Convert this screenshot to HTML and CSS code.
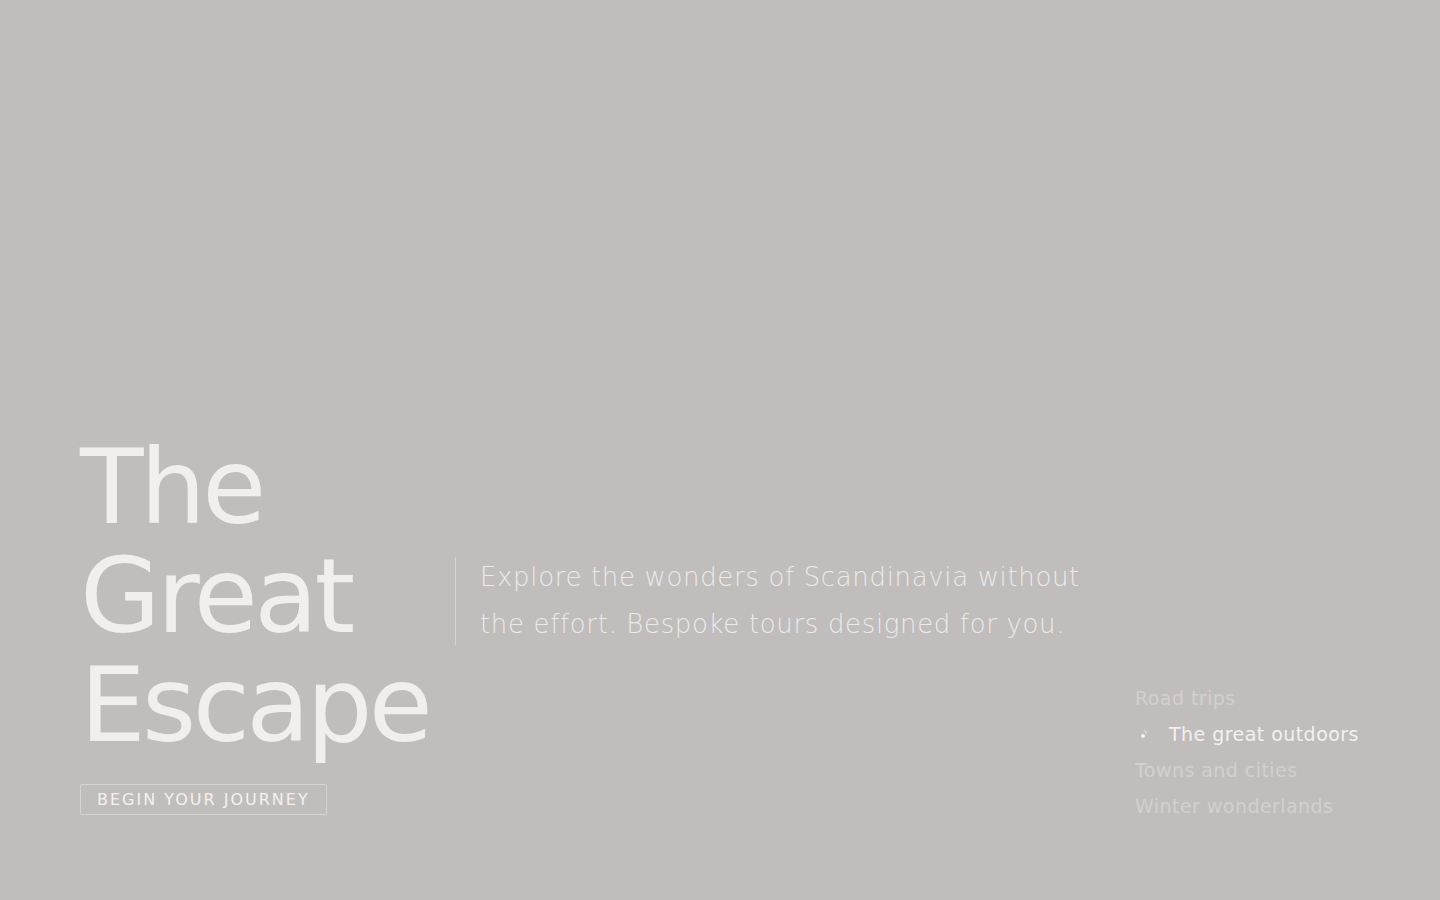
FILE: index.html
```html
<!DOCTYPE html>
<html lang="en">
<head>
<meta charset="utf-8">
<title>The Great Escape</title>
<link rel="stylesheet" href="styles.css">
</head>
<body>
<main class="hero">
  <div class="hero-row">
    <div class="hero-main">
      <h1 class="title">The<br>Great<br>Escape</h1>
      <a class="cta" href="#">Begin your journey</a>
    </div>
    <div class="hero-intro">
      <p class="intro-text">Explore the wonders of Scandinavia without the effort. Bespoke tours designed for you.</p>
    </div>
    <nav class="tour-nav">
      <ul class="tour-list">
        <li class="tour-item">Road trips</li>
        <li class="tour-item is-active">
          <svg class="tour-icon" width="14" height="14" viewBox="0 0 14 14" aria-hidden="true">
            <circle cx="8" cy="9" r="2" fill="#f4f2f1"/>
            <path d="M9.2 3.4 A4.5 4.5 0 0 1 11.6 6.6" fill="none" stroke="#f4f2f1" stroke-width="1.2" stroke-linecap="round" opacity="0.55"/>
          </svg>
          <span>The great outdoors</span>
        </li>
        <li class="tour-item">Towns and cities</li>
        <li class="tour-item">Winter wonderlands</li>
      </ul>
    </nav>
  </div>
</main>
</body>
</html>
```

FILE: styles.css
```css
html, body {
  margin: 0;
  padding: 0;
}

body {
  background: #c1bdbc;
  font-family: "DejaVu Sans", "Liberation Sans", sans-serif;
  color: #f2f0ef;
}

.hero {
  box-sizing: border-box;
  width: 1440px;
  height: 900px;
  display: flex;
  flex-direction: column;
  justify-content: flex-end;
  padding: 0 80px 85px 80px;
}

.hero-row {
  display: flex;
  align-items: flex-end;
}

.hero-main {
  width: 375px;
  display: flex;
  flex-direction: column;
  align-items: flex-start;
}

.title {
  margin: 0;
  font-size: 104px;
  line-height: 109px;
  font-weight: 400;
  letter-spacing: -3.6px;
  color: #f1efee;
}

.cta {
  margin-top: 24px;
  display: inline-block;
  height: 29px;
  line-height: 29px;
  padding: 0 16px 0 16px;
  border: 1px solid rgba(255, 255, 255, 0.35);
  border-radius: 2px;
  color: #f4f2f1;
  text-decoration: none;
  text-transform: uppercase;
  font-size: 16px;
  letter-spacing: 2px;
}

.hero-intro {
  margin-bottom: 170px;
  border-left: 1px solid rgba(255, 255, 255, 0.35);
  padding: 0 0 0 24px;
  height: 88px;
  display: flex;
  align-items: center;
}

.intro-text {
  margin: 0;
  width: 640px;
  font-size: 26px;
  font-weight: 200;
  line-height: 47px;
  letter-spacing: 0.65px;
  color: rgba(255, 255, 255, 0.7);
}

.tour-nav {
  margin-left: auto;
  margin-bottom: -9px;
  width: 225px;
}

.tour-list {
  list-style: none;
  margin: 0;
  padding: 0;
}

.tour-item {
  display: flex;
  align-items: center;
  height: 36px;
  font-size: 19px;
  letter-spacing: 0.45px;
  color: rgba(255, 255, 255, 0.3);
  white-space: nowrap;
}

.tour-item.is-active {
  color: #f3f1f0;
}

.tour-icon {
  margin-right: 20px;
  flex: none;
}
```
